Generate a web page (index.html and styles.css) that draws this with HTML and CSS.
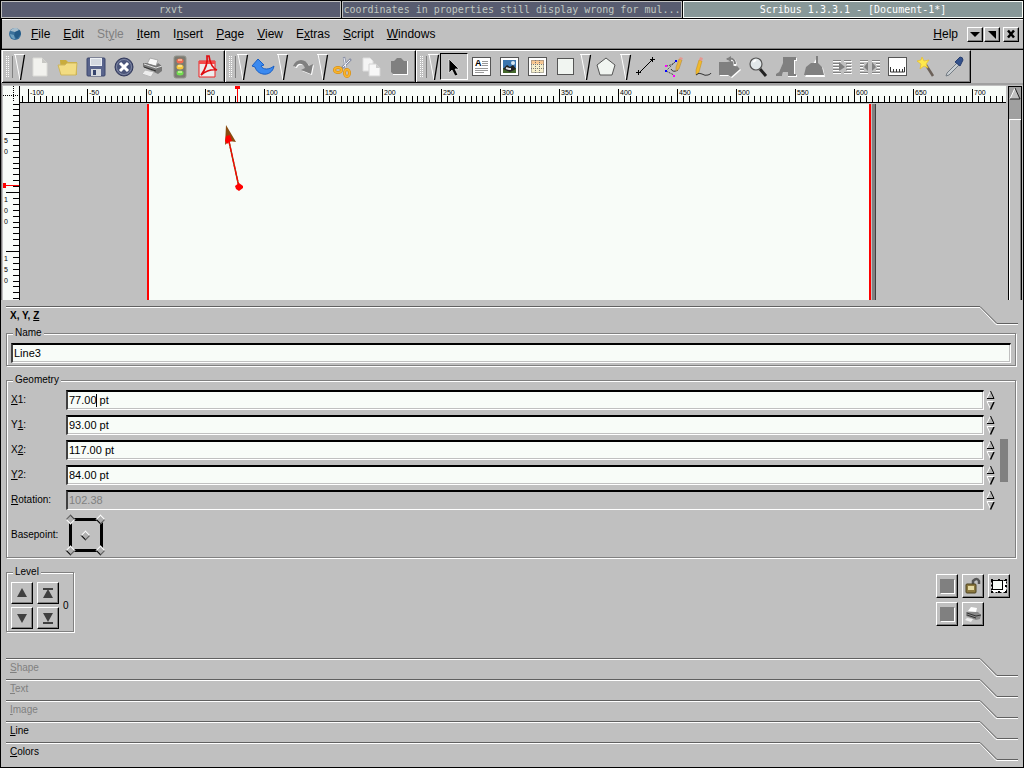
FILE: index.html
```html
<!DOCTYPE html>
<html lang="en">
<head>
    <meta charset="UTF-8">
    <meta name="viewport" content="width=device-width, initial-scale=1.0">
    <title>Scribus 1.3.3.1 - [Document-1*]</title>
    <link rel="stylesheet" href="styles.css">
</head>
<body>
    <header class="titlebar">
        <div class="title">rxvt</div>
        <div class="title">coordinates in properties still display wrong for mul...</div>
        <div class="title active">Scribus 1.3.3.1 - [Document-1*]</div>
    </header>

    <nav class="menubar">
        <svg class="logo" viewBox="0 0 14 14">
            <circle cx="7" cy="7" r="6" fill="#3b719b"/>
            <path d="M2 4Q5 0 9 1L11 3 7 5 3 4Z" fill="#a6bdcc"/>
            <path d="M7 5l5-2 1 4-4 5-3-3Z" fill="#245a86"/>
            <path d="M2 7l4 1 1 4Q3 12 2 7Z" fill="#6ea0bf"/>
        </svg>
        <button><u>F</u>ile</button>
        <button><u>E</u>dit</button>
        <button disabled>St<u>y</u>le</button>
        <button><u>I</u>tem</button>
        <button>I<u>n</u>sert</button>
        <button><u>P</u>age</button>
        <button><u>V</u>iew</button>
        <button>E<u>x</u>tras</button>
        <button><u>S</u>cript</button>
        <button><u>W</u>indows</button>
        <button class="help"><u>H</u>elp</button>
        <div class="window-buttons">
            <button class="raised" aria-label="Minimize"><svg viewBox="0 0 12 12"><path d="M1 4h10L6 9Z"/></svg></button>
            <button class="raised" aria-label="Restore"><svg viewBox="0 0 12 12"><path d="M2 3h8v8Z"/></svg></button>
            <button class="raised close" aria-label="Close"><svg viewBox="0 0 12 12"><path d="M3 2.500l6 7M9 2.500l-6 7" stroke="#000" stroke-width="2.500"/></svg></button>
        </div>
    </nav>

    <div class="toolbars">
        <div class="toolbar">
            <span class="handle"></span>
            <svg class="sep" viewBox="0 0 12 28"><path d="M0 1.500h10M1 1l5 26" stroke="#fff"/><path d="M10.500 2L6.500 27" stroke="#000" stroke-width="1.300"/></svg>
            <button class="tool" aria-label="New"><svg viewBox="0 0 24 24"><path d="M5 3h9l5 5v13H5Z" fill="#f2f2ee" stroke="#dcdcd8"/><path d="M14 3v5h5Z" fill="#c8c8c4"/></svg></button>
            <button class="tool" aria-label="Open"><svg viewBox="0 0 24 24"><path d="M4 5h6l2 2h9v13H5Z" fill="#c9ac3c"/><path d="M2 10h7l2-2h10l-1 12H5Z" fill="#f2dc82" stroke="#ceb65c"/></svg></button>
            <button class="tool" aria-label="Save"><svg viewBox="0 0 24 24"><rect x="3" y="3" width="18" height="18" rx="1" fill="#59648c" stroke="#3c466c"/><path d="M6 3h12v8H6Z" fill="#edf0f4"/><path d="M7 5h10M7 7h10M7 9h10" stroke="#b9c0cc"/><path d="M7 14h10v7H7Z" fill="#d5d9dd"/><path d="M9 15h3v5H9Z" fill="#36446c"/></svg></button>
            <button class="tool" aria-label="Close document"><svg viewBox="0 0 24 24"><circle cx="12" cy="12" r="9" fill="#4b557a" stroke="#30375a"/><circle cx="12" cy="12" r="7.500" fill="none" stroke="#8088a4"/><path d="M8 8l8 8M16 8l-8 8" stroke="#fff" stroke-width="3"/></svg></button>
            <button class="tool" aria-label="Print"><svg viewBox="0 0 24 24"><path d="M7 9l3-6 8 2-2 6Z" fill="#f8f8f8" stroke="#aaa"/><path d="M3 8l4 0 9 3 2-3 4 3v5l-4 3L3 12Z" fill="#777"/><path d="M4 9l12 4 6-2" stroke="#ddd" fill="none"/><path d="M4 12l12 4" stroke="#333"/><path d="M5 15l9 2-3 5-9-3Z" fill="#eee" stroke="#bbb"/></svg></button>
            <button class="tool" aria-label="Preflight"><svg viewBox="0 0 24 24"><rect x="6" y="1" width="12" height="22" rx="2" fill="#7b7b72" stroke="#94948c"/><ellipse cx="12" cy="6" rx="3.500" ry="2.500" fill="#ee6b50"/><ellipse cx="12" cy="12" rx="3.500" ry="2.500" fill="#f4c83c"/><ellipse cx="12" cy="18" rx="3.500" ry="2.500" fill="#70e04e"/><path d="M10 5h4M10 11h4M10 17h4" stroke="#fff8d0"/></svg></button>
            <button class="tool" aria-label="Export PDF"><svg viewBox="0 0 24 24"><path d="M3 6h16v16H3Z" fill="#ececec" stroke="#e22"/><path d="M3 6h16v3H3Z" fill="#f24a4a"/><path d="M11 1l2 0c1 7 3 12 8 14-6-1-11 1-16 5C9 15 12 9 11 1Z" fill="none" stroke="#e00c10" stroke-width="1.700"/></svg></button>
        </div>

        <div class="toolbar">
            <span class="handle"></span>
            <svg class="sep" viewBox="0 0 12 28"><path d="M0 1.500h10M1 1l5 26" stroke="#fff"/><path d="M10.500 2L6.500 27" stroke="#000" stroke-width="1.300"/></svg>
            <button class="tool" aria-label="Undo"><svg viewBox="0 0 24 24"><path d="M1 11L7 4l6 6-3 1c2 4 8 4 13 0-1 6-6 9-11 8-5-1-7-4-8-7Z" fill="#3b8af0" stroke="#195fc4"/></svg></button>
            <svg class="sep" viewBox="0 0 12 28"><path d="M0 1.500h10M1 1l5 26" stroke="#fff"/><path d="M10.500 2L6.500 27" stroke="#000" stroke-width="1.300"/></svg>
            <button class="tool" aria-label="Redo" disabled><svg viewBox="0 0 24 24"><path d="M2 11C5 3 15 3 18 11l4-2-2 10-10-4 4-2C12 8 7 7 5 12Z" fill="#fff" transform="translate(1 1)"/><path d="M2 11C5 3 15 3 18 11l4-2-2 10-10-4 4-2C12 8 7 7 5 12Z" fill="#808080"/></svg></button>
            <svg class="sep" viewBox="0 0 12 28"><path d="M0 1.500h10M1 1l5 26" stroke="#fff"/><path d="M10.500 2L6.500 27" stroke="#000" stroke-width="1.300"/></svg>
            <button class="tool" aria-label="Cut"><svg viewBox="0 0 24 24"><path d="M13 2l2 12M20 4L10 14" stroke="#8c92a8" stroke-width="2.500"/><path d="M13 3l2 10M19 5l-7 7" stroke="#f0f2f8"/><ellipse cx="7" cy="15" rx="3.500" ry="2.500" fill="none" stroke="#d98f12" stroke-width="3"/><ellipse cx="16" cy="18" rx="2.500" ry="3.500" fill="none" stroke="#d98f12" stroke-width="3"/><ellipse cx="7" cy="15" rx="3.500" ry="2.500" fill="none" stroke="#f9b52c" stroke-width="1.500"/><ellipse cx="16" cy="18" rx="2.500" ry="3.500" fill="none" stroke="#f9b52c" stroke-width="1.500"/></svg></button>
            <button class="tool" aria-label="Copy"><svg viewBox="0 0 24 24"><path d="M4 3h7l3 3v10H4Z" fill="#f4f4f4" stroke="#ddd"/><path d="M10 9h7l4 4v8H10Z" fill="#f7f7f7" stroke="#d4d4d4"/><path d="M17 9v4h4Z" fill="#ccc"/></svg></button>
            <button class="tool" aria-label="Paste" disabled><svg viewBox="0 0 24 24"><path d="M5 6h16v14H6Z" fill="#fff"/><path d="M4 6h3l3-3h4l3 3h3v13H6l-2-2Z" fill="#808080"/></svg></button>
        </div>

        <div class="toolbar">
            <span class="handle"></span>
            <svg class="sep" viewBox="0 0 12 28"><path d="M0 1.500h10M1 1l5 26" stroke="#fff"/><path d="M10.500 2L6.500 27" stroke="#000" stroke-width="1.300"/></svg>
            <button class="tool pressed" aria-label="Select"><svg viewBox="0 0 24 24"><path d="M7 4v14l3-3 3 6 3-1-3-6h4Z" fill="#000" stroke="#eee" stroke-width=".7"/></svg></button>
            <button class="tool" aria-label="Text frame"><svg viewBox="0 0 24 24"><rect x="2.500" y="2.500" width="18" height="18" fill="#fff" stroke="#555"/><path d="M12 6.500h6M12 8.500h6M12 10.500h6M5 13.500h13M5 15.500h13M5 17.500h9" stroke="#999"/><text class="glyph" x="5" y="11">A</text></svg></button>
            <button class="tool" aria-label="Image frame"><svg viewBox="0 0 24 24"><rect x="2.500" y="2.500" width="18" height="18" fill="#fff" stroke="#555"/><path d="M5 5h13v13H5Z" fill="#3b75ae"/><path d="M5 13h13v5H5Z" fill="#45682c"/><path d="M5 14l4-4 3 2 3-2 3 4-6 3Z" fill="#222"/><circle cx="15" cy="8" r="2" fill="#d8e8f4"/><path d="M8 13l3 1 2 0" stroke="#ddd" stroke-width="2"/></svg></button>
            <button class="tool" aria-label="Table"><svg viewBox="0 0 24 24"><rect x="2.500" y="2.500" width="18" height="18" fill="#fff" stroke="#555"/><path d="M5 5h13v4H5Z" fill="#f9c891"/><path d="M5 9h13v9H5Z" fill="#f6efcc"/><path d="M5.500 5.500h12v12h-12ZM5 9.500h13M5 13.500h13M9.500 5v13M13.500 5v13" fill="none" stroke="#777" stroke-dasharray="1 1"/></svg></button>
            <button class="tool" aria-label="Shape"><svg viewBox="0 0 24 24"><rect x="3.500" y="3.500" width="16" height="16" fill="#f1f5f1" stroke="#555"/></svg></button>
            <svg class="sep" viewBox="0 0 12 28"><path d="M0 1.500h10M1 1l5 26" stroke="#fff"/><path d="M10.500 2L6.500 27" stroke="#000" stroke-width="1.300"/></svg>
            <button class="tool" aria-label="Polygon"><svg viewBox="0 0 24 24"><path d="M12 3l9 7-3 10H6L3 10Z" fill="#f1f5f1" stroke="#555"/></svg></button>
            <svg class="sep" viewBox="0 0 12 28"><path d="M0 1.500h10M1 1l5 26" stroke="#fff"/><path d="M10.500 2L6.500 27" stroke="#000" stroke-width="1.300"/></svg>
            <button class="tool" aria-label="Line"><svg viewBox="0 0 24 24"><path d="M5 18L19 4M4.500 15v5M2 17.500h5M18.500 2v5M16 4.500h5" stroke="#000"/></svg></button>
            <button class="tool" aria-label="Bezier"><svg viewBox="0 0 24 24"><path d="M4 11q5 0 10-5M14 6q-6 6-10 10M4 16l8 4" fill="none" stroke="#444" stroke-dasharray="2 1"/><path d="M9 14q2 4 7 1" fill="none" stroke="#333"/><path d="M17 4l3 1-3 9-3 2v-4Z" fill="#e8b43a" stroke="#a88444" stroke-width=".5"/><path d="M17 4l1-2 3 1-1 2Z" fill="#e69790"/><path d="M3 10h2v2H3ZM11 20h2v2h-2Z" fill="#f0f"/><path d="M3 15h2v2H3ZM13 5h2v2h-2Z" fill="#00f"/></svg></button>
            <button class="tool" aria-label="Freehand"><svg viewBox="0 0 24 24"><path d="M9 5l3 1-3 11-3 3v-5Z" fill="#f0b92c" stroke="#c18a19" stroke-width=".5"/><path d="M9 5l1-3 3 1-1 3Z" fill="#e69790"/><path d="M6 20q3-3 6-1t6 1 3-2" fill="none" stroke="#333"/></svg></button>
            <button class="tool" aria-label="Rotate" disabled><svg viewBox="0 0 24 24"><path d="M2 8h10l3-2 8 9-9 8-3-2H2Z" fill="#fff"/><path d="M1 7h8l6-1 7 8-9 8-3-2H1Z" fill="#808080"/><path d="M10 4q8-1 7 7" fill="none" stroke="#fff" stroke-width="3"/><path d="M9 4q8-2 8 5" fill="none" stroke="#808080" stroke-width="2"/><path d="M13 1v6L8 4Z" fill="#808080"/></svg></button>
            <button class="tool" aria-label="Zoom"><svg viewBox="0 0 24 24"><path d="M14 14l6 7" stroke="#222" stroke-width="3"/><circle cx="10" cy="9" r="6" fill="#e2e8ea" stroke="#555" stroke-width="1.200"/><path d="M7 7l3-2" stroke="#fff" stroke-width="2"/></svg></button>
            <button class="tool" aria-label="Edit contents" disabled><svg viewBox="0 0 24 24"><path d="M12 3h11v3h-2v14h2v2h-9v-5H9l-1 4H3Z" fill="#fff"/><path d="M9 2h13v3h-2v14h2v2h-8v-4H9l-1 4H2v-2l3-2 4-9V5Z" fill="#808080"/></svg></button>
            <button class="tool" aria-label="Edit text" disabled><svg viewBox="0 0 24 24"><path d="M16 1v8l5 4 2 9H3Z" fill="#fff"/><path d="M14 1h2v7l4 4 2 8H2l2-8 5-4h5Z" fill="#808080"/></svg></button>
            <button class="tool" aria-label="Link frames" disabled><svg viewBox="0 0 24 24"><path d="M3 6.500h8M3 9.500h7M3 12.500h7M3 15.500h7M3 18.500h8M14 6.500h8M17 9.500h5M17 12.500h5M17 15.500h5M14 18.500h8" stroke="#fff"/><path d="M3 5.500h8M3 8.500h7M3 11.500h7M3 14.500h7M3 17.500h8M14 5.500h7M16 8.500h5M16 11.500h5M16 14.500h5M14 17.500h7" stroke="#808080"/><path d="M9 7l6 5-6 4Z" fill="#808080"/></svg></button>
            <button class="tool" aria-label="Unlink frames" disabled><svg viewBox="0 0 24 24"><path d="M2 6.500h8M2 9.500h4M2 12.500h3M2 15.500h4M2 18.500h8M14 6.500h8M18 9.500h4M19 12.500h3M18 15.500h4M14 18.500h8" stroke="#fff"/><path d="M2 5.500h8M2 8.500h4M2 11.500h3M2 14.500h4M2 17.500h8M14 5.500h8M18 8.500h4M19 11.500h3M18 14.500h4M14 17.500h8" stroke="#808080"/><path d="M10 7v9l-4-4ZM14 7v9l4-4Z" fill="#808080"/></svg></button>
            <button class="tool" aria-label="Measure"><svg viewBox="0 0 24 24"><rect x="2.500" y="2.500" width="18" height="18" fill="#fff" stroke="#555"/><path d="M4.500 12v5h14v-5M7.500 17v-3M10.500 17v-3M13.500 17v-3M16.500 17v-3" fill="none" stroke="#333"/></svg></button>
            <button class="tool" aria-label="Copy properties"><svg viewBox="0 0 24 24"><path d="M12 10l7 11" stroke="#6b6058" stroke-width="2.500"/><path d="M8 2l2 4 5-1-3 4 2 4-4-2-4 3 1-5-4-3 4-1Z" fill="#ffe94c" stroke="#e9bd27" stroke-width=".7"/></svg></button>
            <button class="tool" aria-label="Color picker"><svg viewBox="0 0 24 24"><path d="M15 8L5 18l-1 3 3-1L17 10Z" fill="#c8ced2" stroke="#747c84"/><path d="M13 7l5 4 3-6q0-3-3-3Z" fill="#34528c" stroke="#273e70"/></svg></button>
        </div>
    </div>

    <main class="workspace">
        <div class="corner"></div>
        <svg class="ruler ruler-h" id="rulerH"></svg>
        <svg class="ruler ruler-v" id="rulerV"></svg>
        <div class="canvas">
            <div class="page">
                <svg class="arrow-line" viewBox="0 0 30 74">
                    <path d="M20 66L9 16" stroke="#8a4b10" stroke-width="1.500"/>
                    <path d="M20 66L9 16" stroke="#f00" stroke-width="1.300" stroke-dasharray="5 1"/>
                    <path d="M7 4L6 24l4-4 7 1Z" fill="#8a4b10"/>
                    <path d="M7 15l4-1 2 6-3 1-2 2-2-3Z" fill="#f00"/>
                    <path d="M16 65l4-3 4 3v2l-4 3-3-2Z" fill="#f00"/>
                </svg>
            </div>
        </div>
        <div class="scrollbar">
            <svg class="scroll-up" viewBox="0 0 12 14"><path d="M6 1L1 12h10Z" fill="#c0c0c0"/><path d="M6 1L1 12" stroke="#fff"/><path d="M6 1l5 11H1" fill="none" stroke="#222"/></svg>
            <div class="thumb"></div>
        </div>
    </main>

    <section class="properties">
        <div class="tab current">
            <button>X, Y, <u>Z</u></button>
            <svg viewBox="0 0 38 20"><path d="M0 1.500L16 18.500H38" stroke="#fff"/><path d="M0 .5L17 17.500H38" stroke="#606060"/></svg>
        </div>

        <fieldset class="group">
            <legend>Name</legend>
            <input type="text" class="field" value="Line3" aria-label="Name">
        </fieldset>

        <fieldset class="group geometry">
            <legend>Geometry</legend>
            <div class="rows">
                <label for="x1"><u>X</u>1:</label>
                <div class="edit"><input type="text" class="field" id="x1" value="77.00 pt"><span class="caret"></span></div>
                <div class="spin">
                    <button aria-label="X1 up"><svg viewBox="0 0 9 9"><path d="M4.500 1L1 8.500h7Z" fill="#b0b0b0"/><path d="M4.500 1L1 8" stroke="#fff"/><path d="M4.500 1L8 8.500H1" fill="none" stroke="#000"/></svg></button>
                    <button aria-label="X1 down"><svg viewBox="0 0 9 9"><path d="M4.500 8L1 .5h7Z" fill="#b0b0b0"/><path d="M8 .5H1L4.500 8" fill="none" stroke="#fff"/><path d="M8 1L4.500 8.500" stroke="#000" stroke-width="1.500"/></svg></button>
                </div>
                <label for="y1">Y<u>1</u>:</label>
                <div class="edit"><input type="text" class="field" id="y1" value="93.00 pt"></div>
                <div class="spin">
                    <button aria-label="Y1 up"><svg viewBox="0 0 9 9"><path d="M4.500 1L1 8.500h7Z" fill="#b0b0b0"/><path d="M4.500 1L1 8" stroke="#fff"/><path d="M4.500 1L8 8.500H1" fill="none" stroke="#000"/></svg></button>
                    <button aria-label="Y1 down"><svg viewBox="0 0 9 9"><path d="M4.500 8L1 .5h7Z" fill="#b0b0b0"/><path d="M8 .5H1L4.500 8" fill="none" stroke="#fff"/><path d="M8 1L4.500 8.500" stroke="#000" stroke-width="1.500"/></svg></button>
                </div>
                <label for="x2">X<u>2</u>:</label>
                <div class="edit"><input type="text" class="field" id="x2" value="117.00 pt"></div>
                <div class="spin">
                    <button aria-label="X2 up"><svg viewBox="0 0 9 9"><path d="M4.500 1L1 8.500h7Z" fill="#b0b0b0"/><path d="M4.500 1L1 8" stroke="#fff"/><path d="M4.500 1L8 8.500H1" fill="none" stroke="#000"/></svg></button>
                    <button aria-label="X2 down"><svg viewBox="0 0 9 9"><path d="M4.500 8L1 .5h7Z" fill="#b0b0b0"/><path d="M8 .5H1L4.500 8" fill="none" stroke="#fff"/><path d="M8 1L4.500 8.500" stroke="#000" stroke-width="1.500"/></svg></button>
                </div>
                <label for="y2"><u>Y</u>2:</label>
                <div class="edit"><input type="text" class="field" id="y2" value="84.00 pt"></div>
                <div class="spin">
                    <button aria-label="Y2 up"><svg viewBox="0 0 9 9"><path d="M4.500 1L1 8.500h7Z" fill="#b0b0b0"/><path d="M4.500 1L1 8" stroke="#fff"/><path d="M4.500 1L8 8.500H1" fill="none" stroke="#000"/></svg></button>
                    <button aria-label="Y2 down"><svg viewBox="0 0 9 9"><path d="M4.500 8L1 .5h7Z" fill="#b0b0b0"/><path d="M8 .5H1L4.500 8" fill="none" stroke="#fff"/><path d="M8 1L4.500 8.500" stroke="#000" stroke-width="1.500"/></svg></button>
                </div>
                <label for="rotation"><u>R</u>otation:</label>
                <div class="edit"><input type="text" class="field" id="rotation" value="102.38" disabled></div>
                <div class="spin">
                    <button aria-label="Rotation up"><svg viewBox="0 0 9 9"><path d="M4.500 1L1 8.500h7Z" fill="#b0b0b0"/><path d="M4.500 1L1 8" stroke="#fff"/><path d="M4.500 1L8 8.500H1" fill="none" stroke="#000"/></svg></button>
                    <button aria-label="Rotation down"><svg viewBox="0 0 9 9"><path d="M4.500 8L1 .5h7Z" fill="#b0b0b0"/><path d="M8 .5H1L4.500 8" fill="none" stroke="#fff"/><path d="M8 1L4.500 8.500" stroke="#000" stroke-width="1.500"/></svg></button>
                </div>
                <span>Basepoint:</span>
                <div class="basepoint">
                    <span class="frame"></span>
                    <input type="radio" name="basepoint" aria-label="Top left" checked>
                    <input type="radio" name="basepoint" aria-label="Top right">
                    <input type="radio" name="basepoint" class="center" aria-label="Center">
                    <input type="radio" name="basepoint" aria-label="Bottom left">
                    <input type="radio" name="basepoint" aria-label="Bottom right">
                </div>
            </div>
            <div class="link"></div>
        </fieldset>

        <div class="bottom">
            <fieldset class="group level">
                <legend>Level</legend>
                <div class="level-buttons">
                    <button class="raised" aria-label="Raise"><svg viewBox="0 0 18 18"><path d="M9 4l5 9H4Z" fill="#404040"/></svg></button>
                    <button class="raised" aria-label="To top"><svg viewBox="0 0 18 18"><path d="M9 5l5 9H4ZM4 4h10v2H4Z" fill="#404040"/></svg></button>
                    <button class="raised" aria-label="Lower"><svg viewBox="0 0 18 18"><path d="M9 14L4 5h10Z" fill="#404040"/></svg></button>
                    <button class="raised" aria-label="To bottom"><svg viewBox="0 0 18 18"><path d="M9 13L4 4h10ZM4 13h10v2H4Z" fill="#404040"/></svg></button>
                </div>
                <output>0</output>
            </fieldset>
            <div class="flags">
                <button class="raised" aria-label="Group" disabled><svg viewBox="0 0 18 20"><path d="M3 4h14v14H3Z" fill="#fff"/><path d="M2 3h14v14H2Z" fill="#808080"/></svg></button>
                <button class="raised" aria-label="Lock"><svg viewBox="0 0 18 20"><path d="M9 8V5q4-4 6 0v3" fill="none" stroke="#555" stroke-width="2.500"/><rect x="2" y="8" width="10" height="9" rx="1" fill="#8c793f" stroke="#4d421f"/><path d="M4 10h6v4H4Z" fill="#e4d9a4"/></svg></button>
                <button class="raised" aria-label="Lock size"><svg viewBox="0 0 18 20"><path d="M1.500 4.500h15v12h-15Z" fill="#fff" stroke="#000" stroke-dasharray="2 2"/><path d="M1 3h2v2H1ZM8 3h2v2H8ZM15 3h2v2h-2ZM15 9h2v2h-2ZM1 15h2v2H1ZM8 15h2v2H8ZM15 15h2v2h-2Z" fill="#000"/><rect x="2.500" y="4.500" width="10" height="9" fill="#f8fcf8" stroke="#000"/></svg></button>
                <button class="raised" aria-label="Ungroup" disabled><svg viewBox="0 0 18 20"><path d="M3 4h14v14H3Z" fill="#fff"/><path d="M2 3h14v14H2Z" fill="#808080"/></svg></button>
                <button class="raised" aria-label="Printing"><svg viewBox="0 0 18 20"><path d="M4 7l3-4 6 1-1 4Z" fill="#fff"/><path d="M2 8l12 0 3 3-1 4-4 1L2 12Z" fill="#888"/><path d="M3 9l9 3 5-1M3 11l9 3" stroke="#333" fill="none"/><path d="M3 14l6 1-2 3-6-2Z" fill="#eee"/></svg></button>
            </div>
        </div>

        <div class="tab">
            <button disabled><u>S</u>hape</button>
            <svg viewBox="0 0 38 20"><path d="M0 1.500L16 18.500H38" stroke="#fff"/><path d="M0 .5L17 17.500H38" stroke="#606060"/></svg>
        </div>
        <div class="tab">
            <button disabled><u>T</u>ext</button>
            <svg viewBox="0 0 38 20"><path d="M0 1.500L16 18.500H38" stroke="#fff"/><path d="M0 .5L17 17.500H38" stroke="#606060"/></svg>
        </div>
        <div class="tab">
            <button disabled><u>I</u>mage</button>
            <svg viewBox="0 0 38 20"><path d="M0 1.500L16 18.500H38" stroke="#fff"/><path d="M0 .5L17 17.500H38" stroke="#606060"/></svg>
        </div>
        <div class="tab">
            <button><u>L</u>ine</button>
            <svg viewBox="0 0 38 20"><path d="M0 1.500L16 18.500H38" stroke="#fff"/><path d="M0 .5L17 17.500H38" stroke="#606060"/></svg>
        </div>
        <div class="tab">
            <button><u>C</u>olors</button>
            <svg viewBox="0 0 38 20"><path d="M0 1.500L16 18.500H38" stroke="#fff"/><path d="M0 .5L17 17.500H38" stroke="#606060"/></svg>
        </div>
    </section>

    <script>
        const NS = 'http://www.w3.org/2000/svg';
        const STEP = 5.9; // pixels per 5pt

        function add(svg, tag, attrs, text) {
            const el = document.createElementNS(NS, tag);
            for (const key in attrs) el.setAttribute(key, attrs[key]);
            if (text !== undefined) el.textContent = text;
            svg.appendChild(el);
        }

        function drawHorizontal(svg, origin, marker) {
            svg.replaceChildren();
            const width = svg.clientWidth;
            for (let i = -Math.floor(origin / STEP); origin + i * STEP < width; i++) {
                const x = Math.round(origin + i * STEP);
                const major = i % 10 === 0;
                add(svg, 'rect', { x: x, y: major ? 3 : 10, width: 1, height: major ? 13 : 6 });
                if (major) add(svg, 'text', { x: x + 2, y: 9 }, i * 5);
            }
            add(svg, 'path', { d: `M${marker - 2} 0h5v3h-2v13h-1v-13h-2z`, fill: '#f00' });
        }

        function drawVertical(svg, origin, marker) {
            svg.replaceChildren();
            const height = svg.clientHeight;
            for (let i = Math.ceil(-origin / STEP); origin + i * STEP < height; i++) {
                const y = Math.round(origin + i * STEP);
                const major = i % 10 === 0;
                add(svg, 'rect', { x: major ? 3 : 10, y: y, width: major ? 13 : 6, height: 1 });
                if (major) {
                    String(i * 5).split('').forEach((digit, n) => {
                        add(svg, 'text', { x: 1, y: y + 10 + n * 11 }, digit);
                    });
                }
            }
            add(svg, 'path', { d: `M0 ${marker - 2}v5h3v-2h13v-1h-13v-2z`, fill: '#f00' });
        }

        function drawRulers() {
            drawHorizontal(document.getElementById('rulerH'), 126, 217);
            drawVertical(document.getElementById('rulerV'), -29, 82);
        }

        drawRulers();
        window.addEventListener('resize', drawRulers);
    </script>
</body>
</html>
```

FILE: styles.css
```css
* { box-sizing: border-box; }
body { margin: 0; min-height: 100vh; display: flex; flex-direction: column; padding: 1px; background: #000; color: #000; font: 10px/12px "Liberation Sans", Arial, sans-serif; }
button { margin: 0; padding: 0; border: none; background: none; color: inherit; font: inherit; }
button:disabled { color: #808080; }
svg { display: block; fill: none; }
u { text-underline-offset: 1px; text-decoration-thickness: 1px; }
.raised { background: #c0c0c0; border: 1px solid; border-color: #fff #000 #000 #fff; box-shadow: inset -1px -1px #808080; }

/* window titles */
.titlebar { display: grid; grid-template-columns: repeat(3, 1fr); gap: 1px; }
.title { height: 17px; border: 1px solid #c0c0c0; background: #585c70; color: #c0c8c0; font: 10px/15px "DejaVu Sans Mono", monospace; text-align: center; white-space: nowrap; overflow: hidden; }
.title.active { background: #889898; color: #fff; border-color: #f8fcf8; }

/* menu */
.menubar { display: flex; align-items: center; gap: 13px; height: 30px; margin: 1px 0 0 1px; padding: 0 4px 0 6px; background: #c0c0c0; border-top: 1px solid #fff; border-bottom: 1px solid #808080; font-size: 12px; line-height: 16px; }
.logo { width: 14px; height: 14px; margin-right: -4px; }
.help { margin-left: auto; }
.window-buttons { display: flex; gap: 1px; margin-left: -4px; }
.window-buttons .raised { width: 16px; height: 15px; }
.window-buttons .close { margin-left: 2px; }
.window-buttons svg { width: 12px; height: 12px; fill: #000; margin: 0 auto; }

/* toolbars */
.toolbars { display: flex; margin-top: 1px; padding-left: 1px; background: #c0c0c0; }
.toolbar { display: flex; align-items: center; height: 33px; padding-right: 2px; border-top: 1px solid #fff; border-bottom: 1px solid #000; border-right: 1px solid #000; box-shadow: inset 1px 0 #fff, inset -1px -1px #808080; }
.handle { width: 8px; height: 22px; margin: 0 1px 0 3px; border-right: 1px solid #808080; background: conic-gradient(#fff 25%, transparent 0) 0 0 / 2px 2px content-box; padding-right: 2px; }
.sep { width: 12px; height: 28px; }
.tool { width: 28px; height: 27px; padding: 1px 2px; }
.tool svg { width: 24px; height: 24px; }
.tool.pressed { padding: 0 1px; border: 1px solid; border-color: #000 #fff #fff #000; }
.glyph { font: bold 9px "Liberation Sans", Arial, sans-serif; fill: #000; }

/* document */
.workspace { flex: 1 0 120px; display: grid; grid-template: 17px 1fr / 17px 1fr 17px; padding: 3px 0 0 2px; background: #c0c0c0; box-shadow: inset 1px 0 #808080, inset 0 2px #a0a0a0; }
.ruler { width: 100%; height: 100%; background: #f8fcf8; fill: #000; font-size: 7px; }
.ruler-h { border-bottom: 1px solid #000; }
.ruler-v { border-right: 1px solid #000; }
.corner { background: linear-gradient(#000, #000) right / 1px 100% no-repeat, repeating-linear-gradient(90deg, #000 0 1px, transparent 1px 2px) 0 9px / 16px 1px no-repeat, repeating-linear-gradient(#000 0 1px, transparent 1px 2px) 10px 0 / 1px 16px no-repeat, #f8fcf8; }
.canvas { min-width: 0; overflow: hidden; padding-top: 1px; }
.page { position: relative; width: 724px; height: 100%; margin-left: 127px; background: #f8fcf8; border: solid #f00; border-width: 0 2px; box-shadow: 1px 0 #c0c0c0, 4px 0 #808080, 5px 0 #404040; }
.arrow-line { position: absolute; left: 70px; top: 17px; width: 30px; height: 74px; }
.scrollbar { grid-column: 3; grid-row: 1 / 3; display: flex; flex-direction: column; margin: 0 1px 0 2px; border: solid #000; border-width: 1px 1px 0; background: #a0a0a0; }
.scroll-up { width: 12px; height: 14px; }
.thumb { flex: 1; margin-top: 18px; background: #c0c0c0; border: solid #fff; border-width: 1px 0 0 1px; box-shadow: inset -1px 0 #808080; }

/* properties */
.properties { padding: 6px 5px 4px; background: #c0c0c0; }
.tab { display: flex; height: 21px; }
.tab button { flex: 1; height: 19px; padding-left: 4px; text-align: left; border-top: 1px solid #606060; box-shadow: inset 0 1px #fff; }
.tab svg { width: 38px; height: 20px; }
.tab.current { font-weight: bold; }
.group { min-width: 0; margin: 0 2px 8px 0; padding: 4px 4px 2px; border: 1px solid #808080; box-shadow: inset 1px 1px #fff, 1px 1px #fff; }
.group legend { margin-left: 2px; padding: 0 2px; background: #c0c0c0; }
.field { display: block; width: 100%; height: 20px; padding: 0 1px 1px; border: solid; border-width: 2px 1px 1px 2px; border-color: #000 #fff #fff #404040; border-radius: 0; outline: 0; background: #f8fcf8; color: #000; box-shadow: inset -1px -1px #c0c0c0; font: 11px "Liberation Sans", Arial, sans-serif; }
.field:disabled { background: #c0c0c0; color: #808080; }
.geometry { position: relative; display: flex; gap: 6px; }
.rows { flex: 1; display: grid; grid-template-columns: 55px 1fr 10px; row-gap: 5px; align-items: center; }
.edit { position: relative; }
.caret { position: absolute; left: 30px; top: 4px; width: 1px; height: 13px; background: #000; }
.spin { padding-left: 2px; display: grid; gap: 2px; }
.spin svg { width: 9px; height: 9px; }
.link { align-self: center; width: 8px; height: 43px; margin: 0 3px 24px 0; background: #808080; }
.basepoint { position: relative; display: grid; grid-template-columns: 30px 9px; justify-content: start; align-content: space-between; height: 40px; }
.basepoint .frame { position: absolute; left: 3px; top: 3px; width: 34px; height: 34px; border: 3px solid #000; }
.basepoint input { appearance: none; position: relative; width: 7px; height: 7px; margin: 1px; background: #b0b0b0; border: 1px solid; border-color: #fff #606060 #000 #fff; transform: rotate(45deg); }
.basepoint input:checked { border-color: #404040 #fff #fff #606060; }
.basepoint .center { grid-column: 1 / 3; justify-self: center; }
.bottom { display: flex; justify-content: space-between; align-items: flex-start; margin-bottom: 26px; }
.level { display: flex; align-items: center; gap: 4px; margin: 0; }
.level-buttons { display: grid; grid-template-columns: 22px 22px; gap: 3px 4px; }
.level-buttons .raised { height: 22px; }
.level-buttons svg { width: 18px; height: 18px; margin: 0 1px; }
.flags { display: grid; grid-template-columns: repeat(3, 22px); gap: 4px; margin: 8px 8px 0 0; }
.flags .raised { height: 24px; }
.flags svg { width: 18px; height: 20px; margin: 0 1px; }
```
